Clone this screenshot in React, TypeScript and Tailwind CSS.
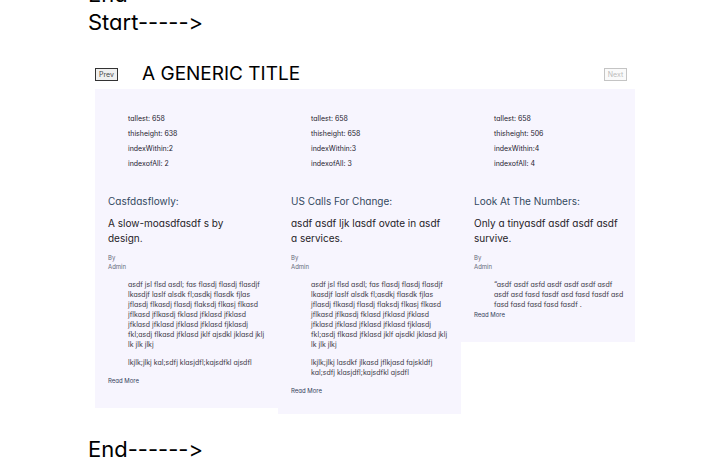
type Article = {
  stats: string[];
  category: string;
  title: string;
  body: string[];
  spacing: string;
};

const articles: Article[] = [
  {
    stats: ["tallest: 658", "thisheight: 638", "indexWithin:2", "indexofAll: 2"],
    category: "Casfdasflowly:",
    title: "A slow-moasdfasdf s by\ndesign.",
    body: [
      "asdf jsl flsd asdl; fas flasdj flasdj flasdjf\nlkasdjf laslf alsdk fl;asdkj flasdk fjlas\njflasdj flkasdj flasdj flaksdj flkasj flkasd\njflkasd jflkasdj fklasd jfklasd jfklasd\njfklasd jfklasd jfklasd jfklasd fjklasdj\nfkl;asdj flkasd jfklasd jklf ajsdkl jklasd jklj\nlk jlk jlkj",
      "lkjlk;jlkj kal;sdfj klasjdfl;kajsdfkl ajsdfl",
    ],
    spacing: "pb-[23px]",
  },
  {
    stats: ["tallest: 658", "thisheight: 658", "indexWithin:3", "indexofAll: 3"],
    category: "US Calls For Change:",
    title: "asdf asdf ljk lasdf ovate in asdf\na services.",
    body: [
      "asdf jsl flsd asdl; fas flasdj flasdj flasdjf\nlkasdjf laslf alsdk fl;asdkj flasdk fjlas\njflasdj flkasdj flasdj flaksdj flkasj flkasd\njflkasd jflkasdj fklasd jfklasd jfklasd\njfklasd jfklasd jfklasd jfklasd fjklasdj\nfkl;asdj flkasd jfklasd jklf ajsdkl jklasd jklj\nlk jlk jlkj",
      "lkjlk;jlkj lasdkf jlkasd jflkjasd fajskldfj\nkal;sdfj klasjdfl;kajsdfkl ajsdfl",
    ],
    spacing: "pb-[19px]",
  },
  {
    stats: ["tallest: 658", "thisheight: 506", "indexWithin:4", "indexofAll: 4"],
    category: "Look At The Numbers:",
    title: "Only a tinyasdf asdf asdf asdf\nsurvive.",
    body: [
      "“asdf asdf asfd asdf asdf asdf asdf\nasdf asd fasd fasdf asd fasd fasdf asd\nfasd fasd fasd fasd fasdf .",
    ],
    spacing: "pb-[23px]",
  },
];

function Card({ article }: { article: Article }) {
  const long = article.body.length > 1;
  return (
    <article
      className={`w-[183px] shrink-0 bg-[#f7f5fe] pt-[22px] pl-[13px] ${article.spacing}`}
    >
      <div className="pl-5 text-[7px] leading-[15px] text-[#25222e]">
        {article.stats.map((s) => (
          <p key={s}>{s}</p>
        ))}
      </div>
      <h3 className="mt-[23px] text-[10px] leading-[15px] whitespace-nowrap text-[#34495e]">
        {article.category}
      </h3>
      <h2 className="mt-[7px] text-[10px] leading-[15px] whitespace-pre text-[#1f1c28]">
        {article.title}
      </h2>
      <p className="mt-[7px] text-[6px] leading-[9px] text-[#666a7a]">
        By
        <br />
        Admin
      </p>
      <div className="mt-[9px] flex flex-col gap-2 pl-5 text-[7px] leading-[10px] whitespace-pre text-[#3c3947]">
        {article.body.map((p) => (
          <p key={p}>{p}</p>
        ))}
      </div>
      <a
        href="#more"
        className={`block text-[6px] leading-[9px] text-[#34405a] ${long ? "mt-2" : ""}`}
      >
        Read More
      </a>
    </article>
  );
}

export default function App() {
  return (
    <main className="overflow-hidden bg-white pr-[81px] pl-[88px] font-['Inter',sans-serif] text-black [font-feature-settings:'calt'_0,'cv11'_1]">
      <div className="-mt-5 text-[22px] leading-7">
        <p>End</p>
        <p>Start-----&gt;</p>
      </div>
      <section className="pt-[22px] pl-[7px]">
        <header className="flex items-center">
          <button className="mt-px h-[13px] w-[23px] border border-[#333] bg-[#efefef] text-[7px] leading-[11px] text-[#444]">
            Prev
          </button>
          <h1 className="ml-6 text-[19px] leading-[31px]">A GENERIC TITLE</h1>
          <button
            disabled
            className="mt-px mr-2 ml-auto h-[13px] w-[23px] border border-[#c4c4c4] bg-[#fafafa] text-[7px] leading-[11px] text-[#bcbcbc]"
          >
            Next
          </button>
        </header>
        <div className="flex items-start overflow-hidden">
          {articles.map((a) => (
            <Card key={a.category} article={a} />
          ))}
        </div>
      </section>
      <p className="mt-[21px] text-[22px] leading-7">End------&gt;</p>
    </main>
  );
}
